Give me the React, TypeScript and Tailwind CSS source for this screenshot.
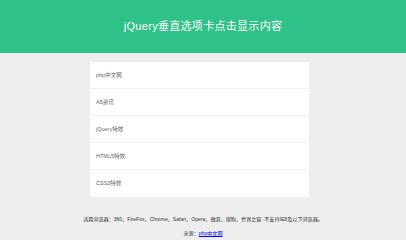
const tabs = ["php中文网", "A5资讯", "jQuery特效", "HTML5特效", "CSS3特效"];

export default function App() {
  return (
    <div
      className="w-[406px] h-[240px] overflow-hidden bg-[#eeeeee]"
      style={{ fontFamily: '"Liberation Sans", "Noto Sans CJK SC", sans-serif' }}
    >
      <header className="h-[53px] bg-[#2ec188] flex items-center justify-center">
        <h1 className="text-white text-[11px] font-normal tracking-[0.3px]">jQuery垂直选项卡点击显示内容</h1>
      </header>

      <div className="mt-[9px] ml-[90px] w-[219px] bg-white">
        {tabs.map((t, i) => (
          <div
            key={t}
            className={`h-[27px] flex items-center pl-[6px] text-[5.5px] text-[#666] ${i < tabs.length - 1 ? "border-b border-[#f3f3f3]" : ""}`}
          >
            {t}
          </div>
        ))}
      </div>

      <div className="mt-[19px] text-center text-[5.1px] text-[#333] leading-[7px]">
        适用浏览器：360、FireFox、Chrome、Safari、Opera、傲游、搜狗、世界之窗. 不支持IE8及以下浏览器。
      </div>
      <div className="mt-[7px] text-center text-[5.1px] text-[#333] leading-[7px]">
        来源：<a href="#" className="text-[#0000ee] underline">php中文网</a>
      </div>
    </div>
  );
}
